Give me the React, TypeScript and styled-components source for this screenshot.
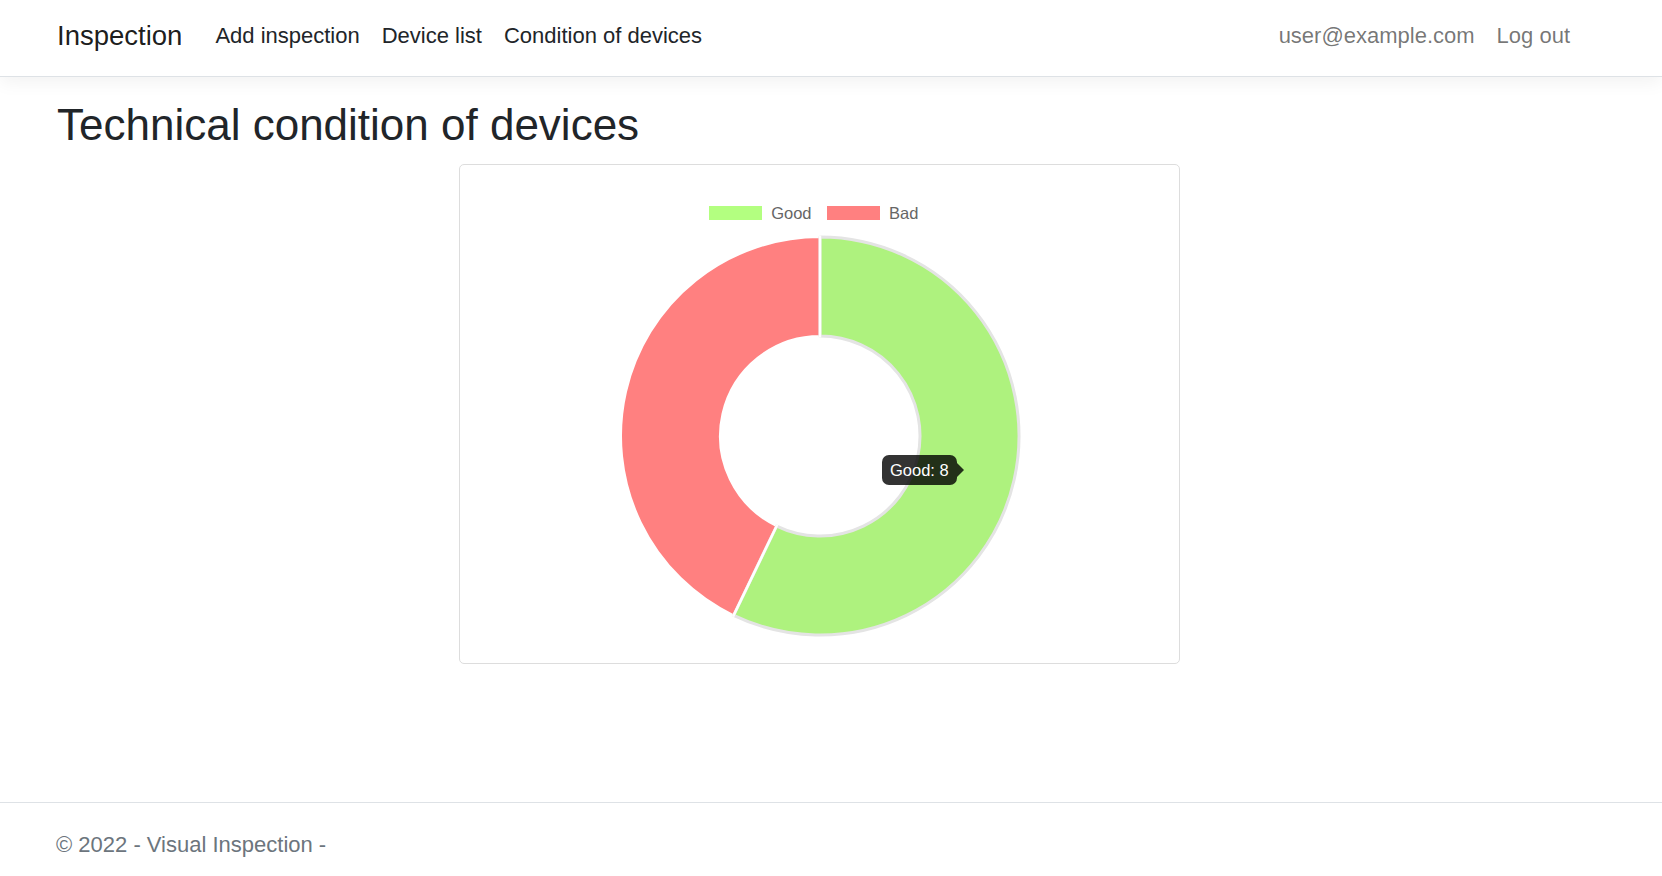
import React from 'react';
import styled, { createGlobalStyle } from 'styled-components';

const GlobalStyle = createGlobalStyle`
  *, *::before, *::after {
    box-sizing: border-box;
  }

  body {
    margin: 0;
    font-family: "Liberation Sans", Arial, sans-serif;
    color: #212529;
    background: #ffffff;
  }
`;

const Page = styled.div`
  display: flex;
  flex-direction: column;
  height: 100vh;
  overflow: hidden;
`;

const Navbar = styled.nav`
  display: flex;
  align-items: center;
  height: 77px;
  padding: 0 81px 4px 57px;
  background: #ffffff;
  border-bottom: 1px solid #dee2e6;
  box-shadow: 0 5.5px 16.5px rgba(0, 0, 0, 0.05);
  flex-shrink: 0;
  position: relative;
  z-index: 1;
`;

const Brand = styled.a`
  font-size: 27.5px;
  color: rgba(0, 0, 0, 0.9);
  text-decoration: none;
  margin-right: 22px;
  white-space: nowrap;
`;

const NavList = styled.ul`
  display: flex;
  list-style: none;
  margin: 0;
  padding: 0;
  flex: 1;
`;

const RightList = styled(NavList)`
  flex: 0 0 auto;
`;

const NavLink = styled.a<{ $muted?: boolean }>`
  display: block;
  padding: 0 11px;
  font-size: 22px;
  color: ${({ $muted }) => ($muted ? 'rgba(0, 0, 0, 0.55)' : '#212529')};
  text-decoration: none;
  white-space: nowrap;
`;

const Main = styled.main`
  flex: 1;
  padding: 22px 81px 0 57px;
`;

const Heading = styled.h1`
  margin: 0 0 12px;
  font-size: 44px;
  font-weight: 400;
  line-height: 1.2;
  color: #212529;
`;

const ChartCard = styled.div`
  width: 721px;
  height: 500px;
  margin: 0 auto;
  padding: 27px 27px 26px;
  border: 1px solid #dddddd;
  border-radius: 5px;
  display: flex;
  flex-direction: column;
  align-items: center;
`;

const Legend = styled.div`
  display: flex;
  gap: 14px;
  margin-top: 13px;
  margin-right: 12px;
  height: 16.5px;
`;

const LegendItem = styled.div`
  display: flex;
  align-items: center;
  gap: 8.5px;
  font-size: 16.5px;
  line-height: 16.5px;
  color: #666666;
`;

const Swatch = styled.span<{ $color: string }>`
  width: 55px;
  height: 16.5px;
  background: ${({ $color }) => $color};
  border: 1px solid #ffffff;
`;

const ChartWrap = styled.div`
  position: relative;
  width: 400px;
  height: 400px;
  margin-top: 15px;
  margin-left: 2px;
`;

const Donut = styled.svg`
  display: block;
  overflow: visible;
`;

const Tooltip = styled.div`
  position: absolute;
  left: 262px;
  top: 219px;
  height: 30px;
  padding: 0 8px;
  display: flex;
  align-items: center;
  background: rgba(0, 0, 0, 0.8);
  border-radius: 7px;
  color: #ffffff;
  font-size: 16.5px;
  white-space: nowrap;

  &::after {
    content: '';
    position: absolute;
    right: -7px;
    top: 50%;
    margin-top: -7px;
    border-style: solid;
    border-width: 7px 0 7px 7px;
    border-color: transparent transparent transparent rgba(0, 0, 0, 0.8);
  }
`;

const Footer = styled.footer`
  flex-shrink: 0;
  height: 74px;
  overflow: hidden;
  border-top: 1px solid #dee2e6;
  padding-left: 56px;
  font-size: 22px;
  line-height: 83px;
  color: #6c757d;
  white-space: nowrap;
`;

const data = [
  { label: 'Good', value: 8, color: '#aef27e', legend: '#b3ff80' },
  { label: 'Bad', value: 6, color: '#ff8080', legend: '#ff8080' },
];

const CX = 200;
const CY = 200;
const R = 199;
const r = 100;

const point = (radius: number, deg: number) => {
  const rad = (deg * Math.PI) / 180;
  return [CX + radius * Math.sin(rad), CY - radius * Math.cos(rad)];
};

const arcPath = (start: number, end: number) => {
  const [ox1, oy1] = point(R, start);
  const [ox2, oy2] = point(R, end);
  const [ix1, iy1] = point(r, start);
  const [ix2, iy2] = point(r, end);
  const large = end - start > 180 ? 1 : 0;
  return `M ${ox1} ${oy1} A ${R} ${R} 0 ${large} 1 ${ox2} ${oy2} L ${ix2} ${iy2} A ${r} ${r} 0 ${large} 0 ${ix1} ${iy1} Z`;
};

const App: React.FC = () => {
  const total = data.reduce((s, d) => s + d.value, 0);
  const goodEnd = (data[0].value / total) * 360;
  const edges = [0, goodEnd];

  return (
    <Page>
      <GlobalStyle />
      <Navbar>
        <Brand href="#">Inspection</Brand>
        <NavList>
          <li><NavLink href="#">Add inspection</NavLink></li>
          <li><NavLink href="#">Device list</NavLink></li>
          <li><NavLink href="#">Condition of devices</NavLink></li>
        </NavList>
        <RightList>
          <li><NavLink $muted href="#">user@example.com</NavLink></li>
          <li><NavLink $muted href="#">Log out</NavLink></li>
        </RightList>
      </Navbar>

      <Main>
        <Heading>Technical condition of devices</Heading>
        <ChartCard>
          <Legend>
            {data.map((d) => (
              <LegendItem key={d.label}>
                <Swatch $color={d.legend} />
                {d.label}
              </LegendItem>
            ))}
          </Legend>
          <ChartWrap>
            <Donut width="400" height="400" viewBox="0 0 400 400">
              <path d={arcPath(goodEnd, 360)} fill={data[1].color} stroke="#ffffff" strokeWidth="2" />
              <path d={arcPath(0, goodEnd)} fill={data[0].color} stroke="#e4e4e4" strokeWidth="3" strokeLinejoin="round" />
              {edges.map((deg) => {
                const [x1, y1] = point(r - 1.5, deg);
                const [x2, y2] = point(R + 1.5, deg);
                return <line key={deg} x1={x1} y1={y1} x2={x2} y2={y2} stroke="#ffffff" strokeWidth="2.5" />;
              })}
            </Donut>
            <Tooltip>Good: 8</Tooltip>
          </ChartWrap>
        </ChartCard>
      </Main>

      <Footer>© 2022 - Visual Inspection -</Footer>
    </Page>
  );
};

export default App;
